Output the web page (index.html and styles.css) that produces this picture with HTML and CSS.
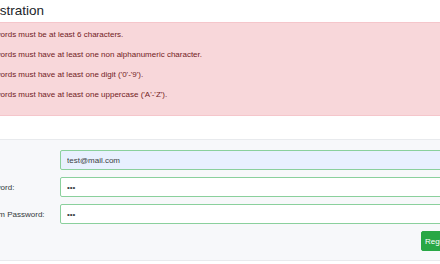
FILE: index.html
```html
<!DOCTYPE html>
<html lang="en">
<head>
<meta charset="UTF-8">
<meta name="viewport" content="width=device-width, initial-scale=1.0">
<title>Registration</title>
<link rel="stylesheet" href="styles.css">
</head>
<body>

<div class="page">
  <h2 class="title">Registration</h2>

  <div class="alert">
    <p>Passwords must be at least 6 characters.</p>
    <p>Passwords must have at least one non alphanumeric character.</p>
    <p>Passwords must have at least one digit ('0'-'9').</p>
    <p>Passwords must have at least one uppercase ('A'-'Z').</p>
  </div>

  <div class="card">
    <form class="form">
      <div class="form-row">
        <label for="email">Email:</label>
        <input type="text" id="email" class="field autofill" value="test@mail.com">
      </div>
      <div class="form-row">
        <label for="password">Password:</label>
        <input type="password" id="password" class="field" value="123">
      </div>
      <div class="form-row">
        <label for="confirm">Confirm Password:</label>
        <input type="password" id="confirm" class="field" value="123">
      </div>
      <div class="actions">
        <button type="button" class="btn">Register</button>
      </div>
    </form>
  </div>
</div>

</body>
</html>
```

FILE: styles.css
```css
body, html {
  margin: 0;
  overflow: hidden;
  background: white;
  font-family: 'Liberation Sans', Arial, sans-serif;
}

.page {
  margin-left: -34px;
  width: 620px;
}

.title {
  font-size: 13.5px;
  font-weight: normal;
  line-height: 18px;
  color: #212529;
  margin: 0 0 2px 6px;
  padding-top: 2px;
}

.alert {
  background-color: #f8d7da;
  border: 1px solid #f5c6cb;
  color: #721c24;
  padding: 6px 10px;
  margin-bottom: 23px;
}

.alert p {
  font-size: 8px;
  line-height: 12px;
  margin: 0 0 8px;
}

.card {
  background-color: #f7f8fa;
  border-top: 1px solid #e8eaed;
  border-bottom: 1px solid #e8eaed;
  padding: 10px 0 9px;
}

.form-row {
  display: flex;
  align-items: center;
  padding-left: 11px;
  margin-bottom: 7px;
}

.form-row label {
  width: 83px;
  font-size: 8px;
  color: #34383c;
}

.field {
  width: 500px;
  height: 20px;
  box-sizing: border-box;
  border: 1px solid #8ad09c;
  border-radius: 2px;
  padding: 0 6px;
  font-family: 'Liberation Sans', Arial, sans-serif;
  font-size: 8px;
  color: #3a3f44;
  background-color: white;
  outline: none;
}

.field.autofill {
  background-color: #e8f0fe;
}

.actions {
  display: flex;
  padding-left: 455px;
  margin-top: 1px;
}

.btn {
  height: 20px;
  background-color: #28a745;
  border: 1px solid #28a745;
  border-radius: 2px;
  color: white;
  font-family: 'Liberation Sans', Arial, sans-serif;
  font-size: 8px;
  padding: 0 3px;
}
```
